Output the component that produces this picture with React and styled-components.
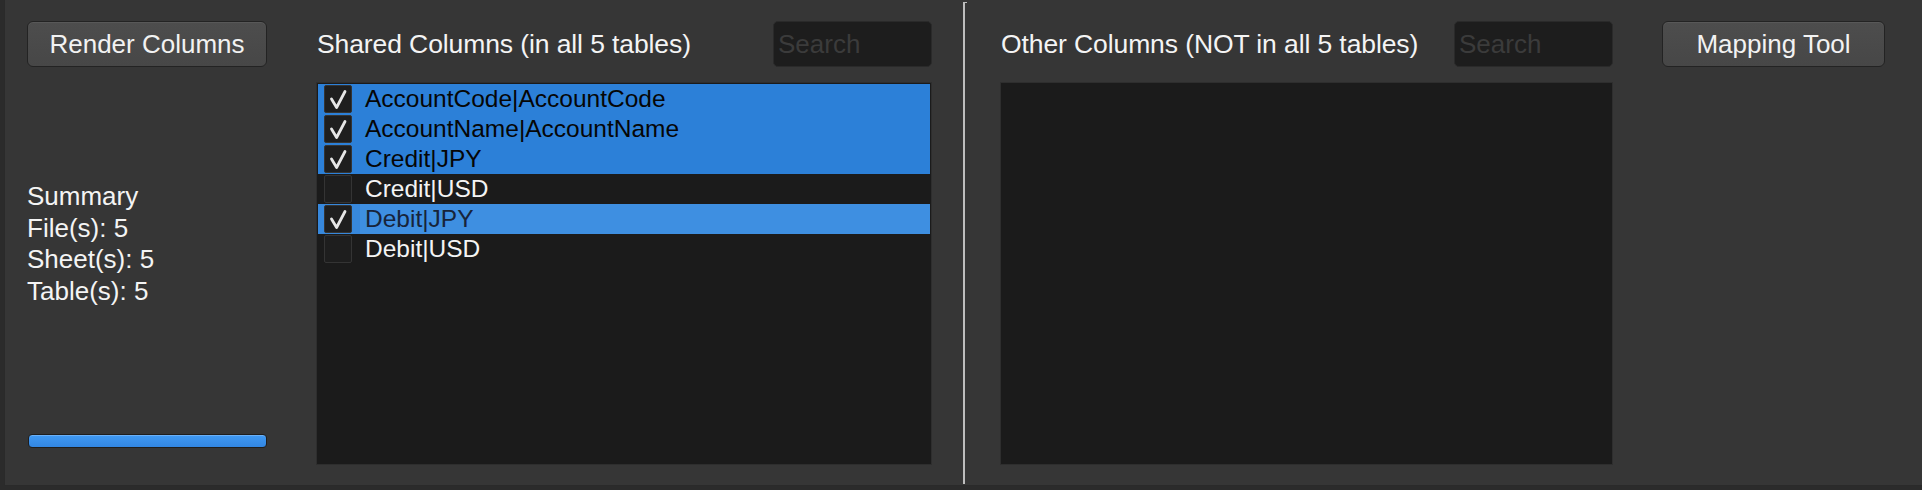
import React from "react";
import styled, { createGlobalStyle } from "styled-components";

const GlobalStyle = createGlobalStyle`
  html, body {
    margin: 0;
    padding: 0;
    background: #2b2b2b;
    font-family: "Liberation Sans", Arial, sans-serif;
    overflow: hidden;
  }
`;

const Window = styled.div`
  width: 1922px;
  height: 490px;
  background: #2b2b2b;
  display: flex;
  align-items: flex-start;
`;

const Panel = styled.div`
  margin-left: 4px;
  width: 1918px;
  height: 486px;
  box-sizing: border-box;
  background: #363636;
  border-left: 1px solid #2a2a2a;
  border-bottom: 1px solid #2a2a2a;
  display: flex;
  padding-left: 22px;
`;

const SideColumn = styled.div`
  width: ${(p) => p.$width || 240}px;
  display: flex;
  flex-direction: column;
  padding: 21px 0 37px;
  box-sizing: border-box;
  margin-left: ${(p) => p.$left || 0}px;
`;

const Button = styled.button`
  width: 100%;
  height: 46px;
  box-sizing: border-box;
  border: 1px solid #232323;
  border-radius: 6px;
  background: linear-gradient(#4d4d4d, #474747);
  box-shadow: inset 0 1px 0 #585858;
  color: #f2f2f2;
  font-family: "Liberation Sans", Arial, sans-serif;
  font-size: 26px;
  padding: 0;
  cursor: pointer;
`;

const Summary = styled.div`
  margin-top: 114px;
  color: #f4f4f4;
  font-size: 26px;
  line-height: 31.5px;
`;

const Progress = styled.div`
  margin-top: auto;
  margin-left: 1px;
  width: 239px;
  height: 14px;
  box-sizing: border-box;
  border: 1px solid #1e1e1e;
  border-radius: 4px;
  background: linear-gradient(#409af4, #3286e2);
  box-shadow: inset 0 1px 0 #6ab0f7;
`;

const ListColumn = styled.div`
  width: ${(p) => p.$width}px;
  display: flex;
  flex-direction: column;
  padding: 21px 0 20px;
  box-sizing: border-box;
  margin-left: ${(p) => p.$left}px;
`;

const Header = styled.div`
  display: flex;
  align-items: center;
  justify-content: space-between;
  height: 46px;
  padding-left: 1px;
`;

const Title = styled.div`
  color: #f4f4f4;
  font-size: 26.5px;
  letter-spacing: -0.1px;
  white-space: nowrap;
`;

const Search = styled.input`
  width: 159px;
  height: 46px;
  box-sizing: border-box;
  background: #1d1d1d;
  border: 1px solid #2a2a2a;
  border-radius: 5px;
  color: #eee;
  font-family: "Liberation Sans", Arial, sans-serif;
  font-size: 26px;
  padding: 0 4px;
  outline: none;
  &::placeholder {
    color: #3b3b3b;
  }
`;

const List = styled.div`
  margin-top: 15px;
  flex: 1;
  background: #1b1b1b;
  border: 1px solid #2e2e2e;
  padding: 1px;
  display: flex;
  flex-direction: column;
`;

const Row = styled.div`
  height: 30px;
  display: flex;
  align-items: center;
  padding-left: 6px;
  background: ${(p) =>
    p.$current ? "#3788dc" : p.$checked ? "#2c80d8" : "transparent"};
  color: ${(p) => (p.$current ? "#17243a" : p.$checked ? "#060606" : "#f4f4f4")};
  font-size: 24.5px;
`;

const Box = styled.div`
  width: 28px;
  height: 28px;
  box-sizing: border-box;
  background: #1e1e1e;
  border: 1px solid #343434;
  border-radius: 2px;
  display: flex;
  align-items: center;
  justify-content: center;
  flex-shrink: 0;
`;

const Label = styled.div`
  flex: 1;
  height: 100%;
  display: flex;
  align-items: center;
  margin-left: ${(p) => (p.$current ? 8 : 13)}px;
  padding-left: ${(p) => (p.$current ? 5 : 0)}px;
  background: ${(p) => (p.$current ? "#3e8fe1" : "transparent")};
  white-space: nowrap;
`;

const Separator = styled.div`
  width: 2px;
  margin: 2px 0 1px 31px;
  background: #bdbdbd;
  position: relative;
  &::after {
    content: "";
    position: absolute;
    top: 0;
    left: 2px;
    width: 2px;
    height: 1px;
    background: #bdbdbd;
  }
`;

const Check = () => (
  <svg width="22" height="22" viewBox="0 0 22 22">
    <path
      d="M4.5 11 L9.6 19.5 L18 3.5"
      fill="none"
      stroke="#e6e6e6"
      strokeWidth="2.8"
      strokeLinecap="round"
      strokeLinejoin="round"
    />
  </svg>
);

const shared = [
  { name: "AccountCode|AccountCode", checked: true },
  { name: "AccountName|AccountName", checked: true },
  { name: "Credit|JPY", checked: true },
  { name: "Credit|USD", checked: false },
  { name: "Debit|JPY", checked: true, current: true },
  { name: "Debit|USD", checked: false },
];

export default function App() {
  return (
    <>
      <GlobalStyle />
      <Window>
        <Panel>
          <SideColumn>
            <Button>Render Columns</Button>
            <Summary>
              <div>Summary</div>
              <div>File(s): 5</div>
              <div>Sheet(s): 5</div>
              <div>Table(s): 5</div>
            </Summary>
            <Progress />
          </SideColumn>

          <ListColumn $width={616} $left={49}>
            <Header>
              <Title>Shared Columns (in all 5 tables)</Title>
              <Search placeholder="Search" />
            </Header>
            <List>
              {shared.map((c) => (
                <Row key={c.name} $checked={c.checked} $current={c.current}>
                  <Box>{c.checked ? <Check /> : null}</Box>
                  <Label $current={c.current}>{c.name}</Label>
                </Row>
              ))}
            </List>
          </ListColumn>

          <Separator />

          <ListColumn $width={613} $left={35}>
            <Header>
              <Title>Other Columns (NOT in all 5 tables)</Title>
              <Search placeholder="Search" />
            </Header>
            <List />
          </ListColumn>

          <SideColumn $width={223} $left={49}>
            <Button>Mapping Tool</Button>
          </SideColumn>
        </Panel>
      </Window>
    </>
  );
}
